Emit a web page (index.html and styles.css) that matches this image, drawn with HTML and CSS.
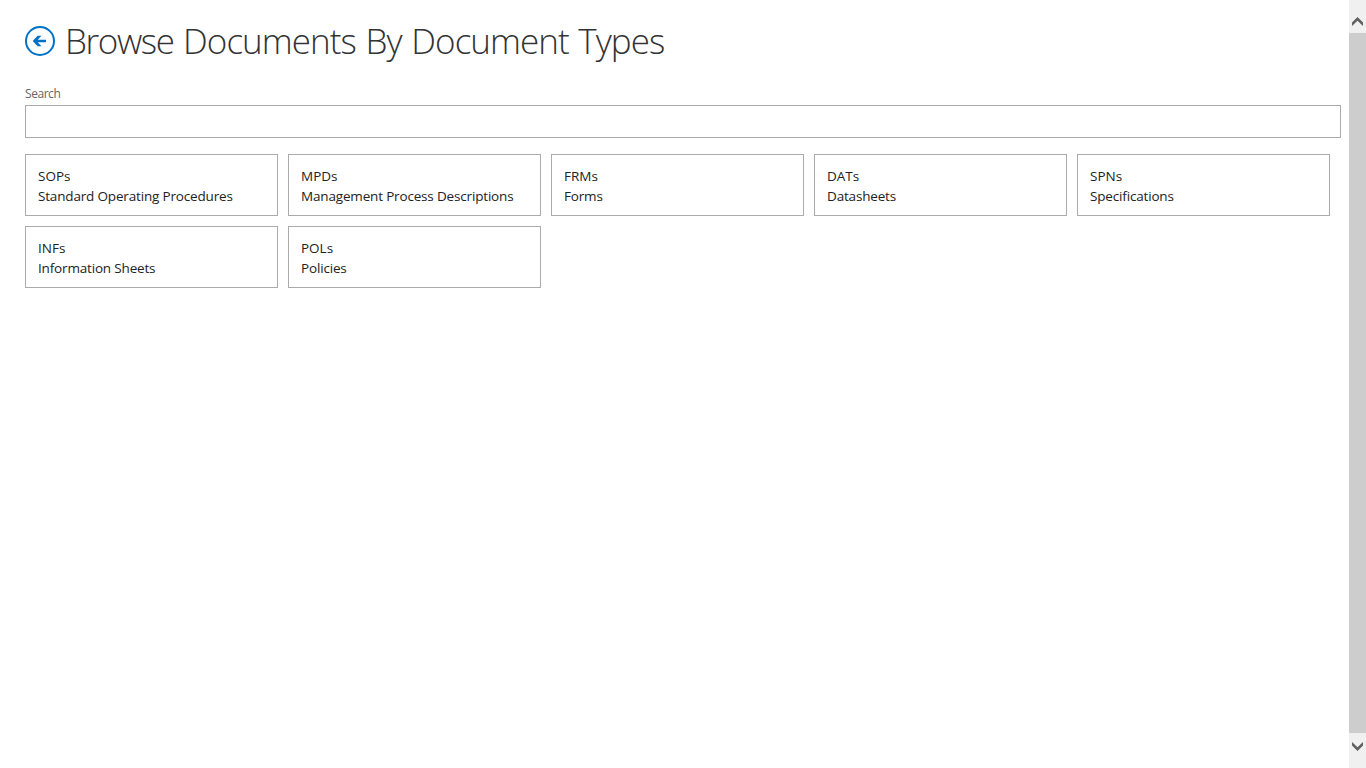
FILE: index.html
```html
<!DOCTYPE html>
<html lang="en">
<head>
<meta charset="utf-8">
<title>Browse Documents By Document Types</title>
<link rel="stylesheet" href="styles.css">
</head>
<body>
<main class="page">
  <header class="header">
    <a class="back" href="#" aria-label="Back"><svg width="30" height="30" viewBox="0 0 30 30"><circle cx="15" cy="15" r="14" fill="none" stroke="#0072c6" stroke-width="2"/><path d="M12.600 9.700H16.500L12.700 13.700H21V16.300H12.700L16.500 20.300H12.600L7.700 15Z" fill="#0072c6"/></svg></a>
    <h1 class="title"><span class="first-word">Browse</span> Documents <span class="short-word">By</span> Document Types</h1>
  </header>
  <label class="label" for="search">Search</label>
  <input class="search" id="search" type="text">
  <section class="tiles">
    <a class="tile"><span>SOPs</span><span class="name">Standard Operating Procedures</span></a>
    <a class="tile"><span>MPDs</span><span class="name">Management Process Descriptions</span></a>
    <a class="tile"><span>FRMs</span><span class="name">Forms</span></a>
    <a class="tile"><span>DATs</span><span class="name">Datasheets</span></a>
    <a class="tile"><span>SPNs</span><span class="name">Specifications</span></a>
    <a class="tile"><span>INFs</span><span class="name">Information Sheets</span></a>
    <a class="tile"><span>POLs</span><span class="name">Policies</span></a>
  </section>
</main>
<aside class="scrollbar">
  <svg class="arrow" width="17" height="33" viewBox="0 0 17 33"><path d="M3 22.500L8.500 17L14 22.500V26L8.500 20.800L3 26Z" fill="#606060"/></svg>
  <div class="thumb"></div>
  <svg class="arrow" width="17" height="35" viewBox="0 0 17 35"><path d="M3 12.500L8.500 18L14 12.500V9L8.500 14.200L3 9Z" fill="#606060"/></svg>
</aside>
</body>
</html>
```
FILE: styles.css
```css
* { box-sizing: border-box; }
body { margin: 0; height: 768px; display: flex; overflow: hidden; background: #fff; font-family: "Open Sans", "Noto Sans", sans-serif; color: #222; }
.page { flex: 1; padding: 16px 8px 0 25px; }
.header { display: flex; height: 50px; gap: 10px; }
.back { display: block; height: 30px; margin-top: 10px; }
.title { margin: 0; font-size: 35px; font-weight: 300; line-height: 50px; color: #333; white-space: nowrap; letter-spacing: -0.95px; word-spacing: 1.4px; }
.first-word { letter-spacing: -1.4px; }
.short-word { letter-spacing: -0.8px; }
.label { display: block; margin-top: 20px; font-size: 12px; line-height: 16px; color: #666; height: 19px; letter-spacing: -0.45px; }
.search { display: block; width: 1316px; height: 33px; border: 1px solid #ababab; padding: 0 6px; background: #fff; }
.tiles { display: grid; grid-template-columns: repeat(5, 253px); grid-auto-rows: 62px; gap: 10px; margin-top: 16px; }
.tile { border: 1px solid #ababab; padding: 11px 12px; display: flex; flex-direction: column; font-size: 13.5px; line-height: 20px; color: #222; white-space: nowrap; }
.tile span { align-self: flex-start; }
.tile .name { letter-spacing: -0.17px; }
.scrollbar { width: 17px; height: 768px; background: #f0f0f0; display: flex; flex-direction: column; flex: none; }
.arrow { display: block; flex: none; }
.thumb { height: 700px; background: #cdcdcd; }
```
